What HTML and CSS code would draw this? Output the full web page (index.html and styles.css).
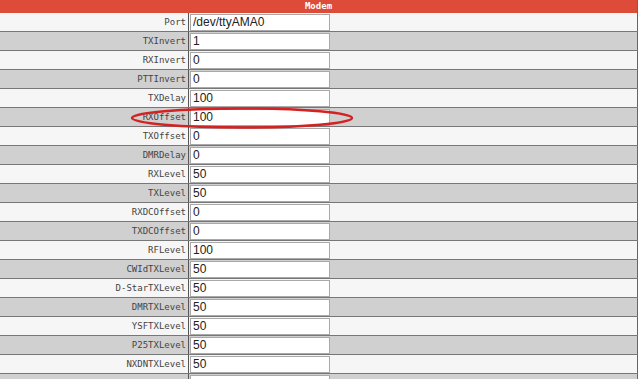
FILE: index.html
```html
<!DOCTYPE html>
<html lang="en">
<head>
    <meta charset="UTF-8">
    <title>Modem</title>
    <link rel="stylesheet" href="styles.css">
</head>
<body>
    <div class="page">
        <table class="settings">
            <tr><th colspan="2">Modem</th></tr>
            <tr><td class="key">Port</td><td class="val"><input type="text" value="/dev/ttyAMA0"></td></tr>
            <tr><td class="key">TXInvert</td><td class="val"><input type="text" value="1"></td></tr>
            <tr><td class="key">RXInvert</td><td class="val"><input type="text" value="0"></td></tr>
            <tr><td class="key">PTTInvert</td><td class="val"><input type="text" value="0"></td></tr>
            <tr><td class="key">TXDelay</td><td class="val"><input type="text" value="100"></td></tr>
            <tr><td class="key">RXOffset</td><td class="val"><input type="text" value="100"></td></tr>
            <tr><td class="key">TXOffset</td><td class="val"><input type="text" value="0"></td></tr>
            <tr><td class="key">DMRDelay</td><td class="val"><input type="text" value="0"></td></tr>
            <tr><td class="key">RXLevel</td><td class="val"><input type="text" value="50"></td></tr>
            <tr><td class="key">TXLevel</td><td class="val"><input type="text" value="50"></td></tr>
            <tr><td class="key">RXDCOffset</td><td class="val"><input type="text" value="0"></td></tr>
            <tr><td class="key">TXDCOffset</td><td class="val"><input type="text" value="0"></td></tr>
            <tr><td class="key">RFLevel</td><td class="val"><input type="text" value="100"></td></tr>
            <tr><td class="key">CWIdTXLevel</td><td class="val"><input type="text" value="50"></td></tr>
            <tr><td class="key">D-StarTXLevel</td><td class="val"><input type="text" value="50"></td></tr>
            <tr><td class="key">DMRTXLevel</td><td class="val"><input type="text" value="50"></td></tr>
            <tr><td class="key">YSFTXLevel</td><td class="val"><input type="text" value="50"></td></tr>
            <tr><td class="key">P25TXLevel</td><td class="val"><input type="text" value="50"></td></tr>
            <tr><td class="key">NXDNTXLevel</td><td class="val"><input type="text" value="50"></td></tr>
            <tr><td class="key"></td><td class="val"><input type="text" value=""></td></tr>
        </table>
        <!-- red circle marking the RXOffset row -->
        <svg class="mark" width="226" height="24" viewBox="0 0 226 24">
            <ellipse cx="113" cy="12" rx="110" ry="9.5" fill="none" stroke="#d42222" stroke-width="2.5"/>
        </svg>
    </div>
</body>
</html>
```

FILE: styles.css
```css
body{margin:0; background:#fff; font-family:"DejaVu Sans Mono", monospace; font-size:9px; color:#444;}
.page{position:relative;}

.settings{width:638px; border-collapse:collapse; border-right:1px solid #666;}
.settings th{background:#dd4b39; color:#fff; font-weight:bold; height:12px; line-height:12px; padding:0 0 1px; text-align:center;}
.settings td{padding:0; height:18px; border-bottom:1px solid #777; background:#f6f6f6;}
.settings tr:nth-child(odd) td{background:#d0d0d0;}

.key{width:186px; text-align:right; padding-right:2px !important; border-right:1px solid #555;}
.val input{display:block; width:140px; height:17px; box-sizing:border-box; margin:0 0 0 1px;
    border:1px solid #a9a9a9; padding:0 2px; background:#fff; color:#222;
    font:12px "Liberation Sans", Arial, sans-serif;}

.mark{position:absolute; left:129px; top:106px;}
```
